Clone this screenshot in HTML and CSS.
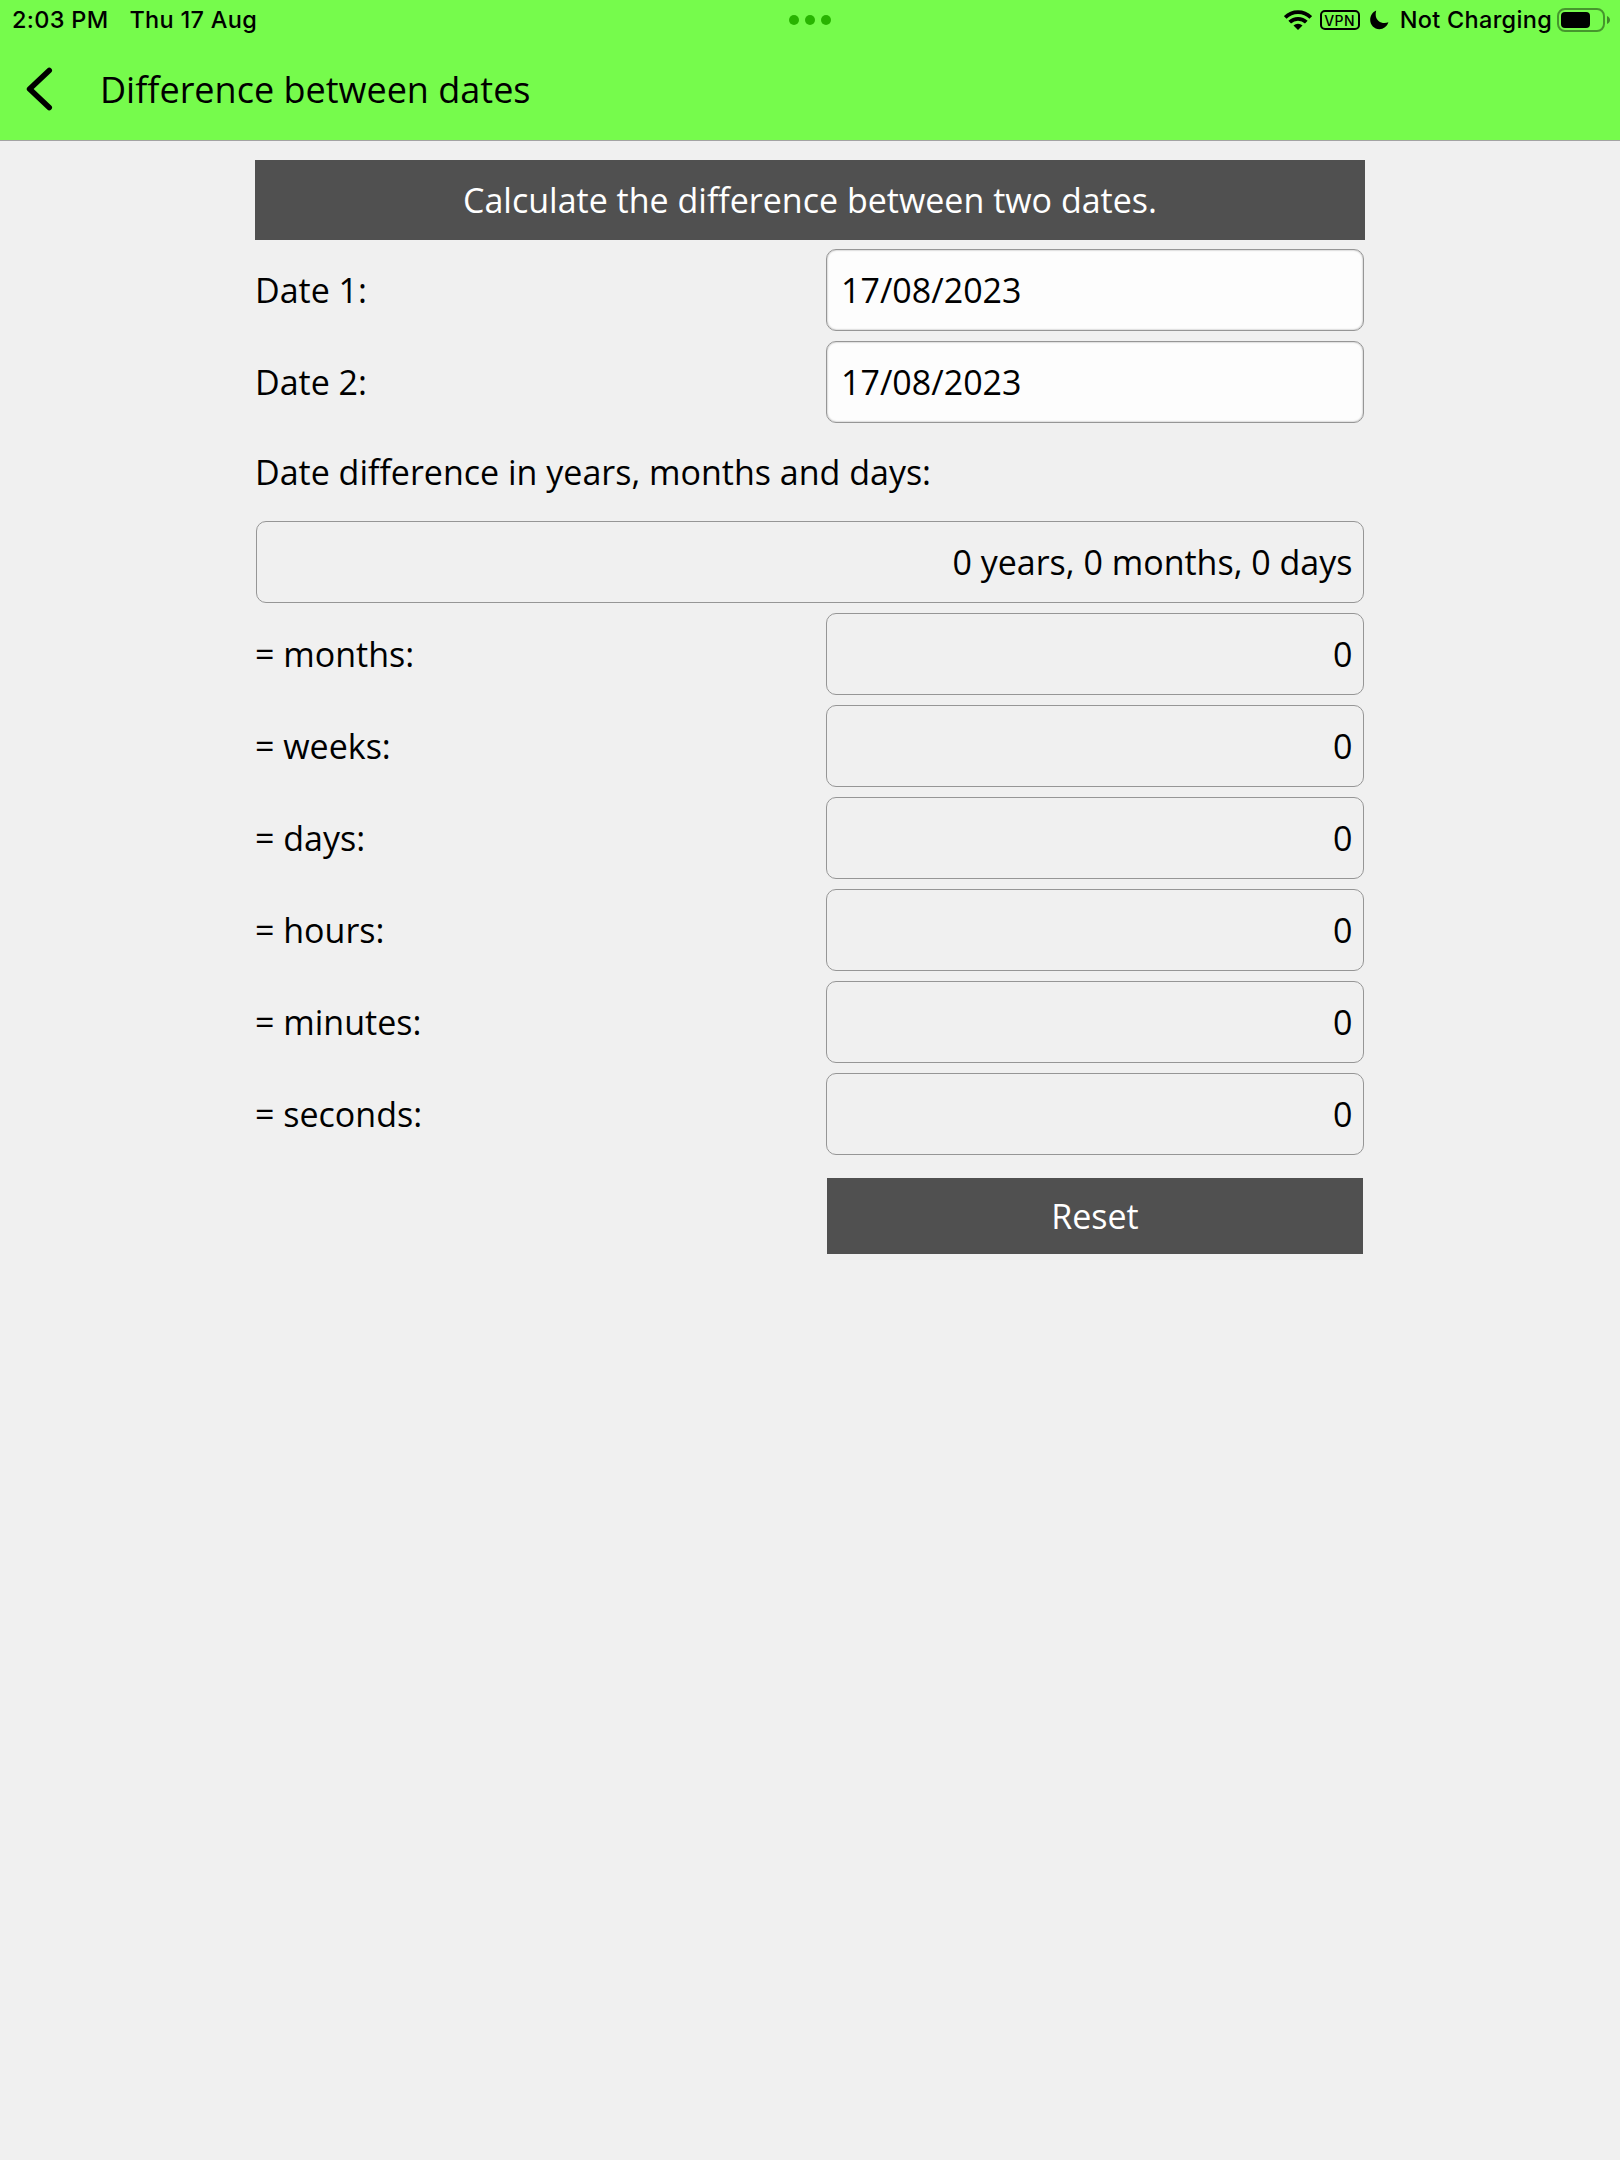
FILE: index.html
```html
<!DOCTYPE html>
<html lang="en">
<head>
<meta charset="utf-8">
<title>Difference between dates</title>
<link rel="stylesheet" href="styles.css">
</head>
<body>
<header class="header">
  <div class="status">
    <div class="status-left"><span class="time">2:03 PM</span><span class="date">Thu 17 Aug</span></div>
    <div class="dots"><i></i><i></i><i></i></div>
    <div class="status-right">
      <svg class="wifi" width="28" height="20" viewBox="0 0 28 20">
        <g fill="none" stroke="#000" stroke-width="3.8">
          <path d="M1.2 7.4A18.2 18.2 0 0 1 26.8 7.4"/>
          <path d="M5.7 12.2A11.8 11.8 0 0 1 22.3 12.2"/>
        </g>
        <path d="M14 20L9.5 15.6A6.4 6.4 0 0 1 18.5 15.6Z"/>
      </svg>
      <span class="vpn">VPN</span>
      <svg class="moon" width="19" height="20" viewBox="0 0 19 20"><path d="M6.2.4C5 5 6 8.700 8.600 10.900C11.200 13.200 15 13.600 18.400 12.300C17 16.600 13.500 19.200 9.400 19.200C4.200 19.200.2 15.200.2 10.100C.2 5.600 2.500 2 6.200.4Z"/></svg>
      <span class="charge">Not Charging</span>
      <svg class="battery" width="54" height="24" viewBox="0 0 54 24">
        <rect x="1" y="1" width="46" height="22" rx="7" fill="none" stroke="#000" stroke-opacity=".4" stroke-width="2"/>
        <rect x="4" y="4" width="29" height="16" rx="4"/>
        <path d="M50 8C52 9 53 10.400 53 12S52 15 50 16Z" opacity=".45"/>
      </svg>
    </div>
  </div>
  <nav class="nav">
    <svg class="back" width="30" height="46" viewBox="0 0 30 46"><path d="M24.200 4.500L4.600 23L24.200 41.500" fill="none" stroke="#000" stroke-width="5.600" stroke-linecap="round" stroke-linejoin="round"/></svg>
    <h1 class="title">Difference between dates</h1>
  </nav>
</header>
<main class="content">
  <div class="banner">Calculate the difference between two dates.</div>
  <div class="row"><span class="label">Date 1:</span><div class="field input">17/08/2023</div></div>
  <div class="row"><span class="label">Date 2:</span><div class="field input">17/08/2023</div></div>
  <div class="heading">Date difference in years, months and days:</div>
  <div class="row wide"><div class="field">0 years, 0 months, 0 days</div></div>
  <div class="row"><span class="label">= months:</span><div class="field">0</div></div>
  <div class="row"><span class="label">= weeks:</span><div class="field">0</div></div>
  <div class="row"><span class="label">= days:</span><div class="field">0</div></div>
  <div class="row"><span class="label">= hours:</span><div class="field">0</div></div>
  <div class="row"><span class="label">= minutes:</span><div class="field">0</div></div>
  <div class="row"><span class="label">= seconds:</span><div class="field">0</div></div>
  <button class="reset">Reset</button>
</main>
</body>
</html>
```
FILE: styles.css
```css
* { box-sizing: border-box; }
body {
  margin: 0;
  min-height: 2160px;
  background: #f0f0f0;
  color: #000;
  font: 34px/46px "Open Sans", "Noto Sans", sans-serif;
  font-variant-ligatures: none;
}
.header {
  height: 141px;
  background: #76fb4c;
  border-bottom: 1px solid #a3a3a3;
}
.status {
  display: grid;
  grid-template-columns: 1fr auto 1fr;
  align-items: center;
  height: 40px;
  font: 500 23.500px/40px Inter, "Liberation Sans", sans-serif;
  letter-spacing: .3px;
  white-space: nowrap;
}
.status-left { display: flex; gap: 21px; padding-left: 12px; }
.dots { display: flex; gap: 6px; }
.dots i { width: 10px; height: 10px; border-radius: 50%; background: #28b400; }
.status-right { display: flex; align-items: center; justify-content: flex-end; padding-right: 9px; }
.vpn {
  width: 40px;
  height: 20px;
  margin-left: 8px;
  border: 2px solid #000;
  border-radius: 5px;
  font-size: 14px;
  line-height: 17px;
  letter-spacing: .5px;
  text-align: center;
}
.moon { margin-left: 10px; }
.charge { margin-left: 11px; }
.battery { margin-left: 5px; }
.nav { display: flex; align-items: center; height: 100px; padding: 0 0 2px 25px; }
.title { margin: 2px 0 0 45px; font-size: 36px; line-height: 50px; font-weight: 400; }
.content { width: 1110px; margin: 19px auto 0; }
.banner {
  height: 80px;
  margin-bottom: 4px;
  background: #505050;
  color: #fff;
  line-height: 80px;
  text-align: center;
}
.row {
  display: grid;
  grid-template-columns: 1fr 538px;
  align-items: center;
  height: 92px;
  padding-right: 1px;
}
.wide { grid-template-columns: 1fr; padding-left: 1px; }
.field {
  height: 82px;
  padding: 0 10.500px;
  border: 1px solid #969696;
  border-radius: 10px;
  line-height: 80px;
  text-align: right;
}
.input {
  padding: 0 14px;
  background: #fdfdfd;
  box-shadow: inset 0 0 2px #999;
  text-align: left;
}
.heading { height: 88px; line-height: 88px; }
.reset {
  display: block;
  width: 536px;
  height: 76px;
  margin: 18px 2px 0 auto;
  padding: 0;
  border: 0;
  background: #505050;
  color: #fff;
  font: inherit;
}
```
